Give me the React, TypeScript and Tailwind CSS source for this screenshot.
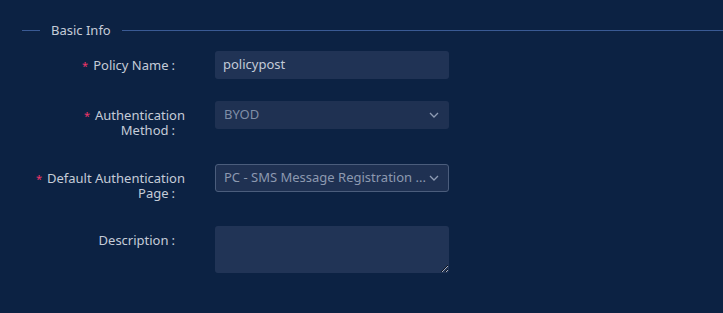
import React from "react";

const Chevron = () => (
  <svg width="10" height="6" viewBox="0 0 10 6" fill="none">
    <path d="M1 1 L5 5 L9 1" stroke="#8e9bb3" strokeWidth="1.3" />
  </svg>
);

function Label({ lines, required }: { lines: string[]; required?: boolean }) {
  return (
    <div className="w-[185px] shrink-0 flex justify-end pt-[7px]">
      <div className="text-right text-[13px] leading-[15px] text-[#c5ccd8] whitespace-nowrap">
        {lines.map((l, i) => (
          <div key={i}>
            {i === 0 && required && (
              <span className="text-[#f0356a] mr-[5px] text-[11px] align-top">*</span>
            )}
            {l}
            {i === lines.length - 1 && <span className="ml-[3px] mr-[10px]">:</span>}
          </div>
        ))}
      </div>
    </div>
  );
}

export default function App() {
  return (
    <div
      className="w-[723px] h-[313px] bg-[#0c2243] overflow-hidden"
      style={{ fontFamily: '"Noto Sans", "Open Sans", sans-serif' }}
    >
      <div className="flex items-center pt-[22px] pl-[22px]">
        <div className="w-[18px] h-px bg-[#3a5a94]" />
        <div className="px-[11px] text-[13px] leading-[16px] text-[#c5ccd8]">Basic Info</div>
        <div className="flex-1 h-px bg-[#3a5a94]" />
      </div>

      <div className="mt-[13px] flex flex-col">
        <div className="flex h-[50px]">
          <Label required lines={["Policy Name"]} />
          <div className="ml-[30px] w-[234px] h-[28px] rounded-[3px] bg-[#203355] flex items-center px-[8px] text-[13px] text-[#c3cbd8]">
            policypost
          </div>
        </div>

        <div className="flex h-[63px]">
          <Label required lines={["Authentication", "Method"]} />
          <div className="ml-[30px] w-[234px] h-[28px] rounded-[3px] bg-[#1f3152] flex items-center justify-between pl-[9px] pr-[10px] text-[13px] text-[#7f8ea7]">
            <span>BYOD</span>
            <Chevron />
          </div>
        </div>

        <div className="flex h-[62px]">
          <Label required lines={["Default Authentication", "Page"]} />
          <div className="ml-[30px] w-[234px] h-[28px] rounded-[3px] bg-[#1f3152] border border-[#4b5d7c] flex items-center justify-between pl-[8px] pr-[9px] text-[13px] text-[#8d99b0]">
            <span className="whitespace-nowrap overflow-hidden">PC - SMS Message Registration ...</span>
            <Chevron />
          </div>
        </div>

        <div className="flex">
          <Label lines={["Description"]} />
          <textarea
            className="ml-[30px] w-[234px] h-[47px] rounded-[3px] bg-[#213456] outline-none resize-y"
            readOnly
          />
        </div>
      </div>
    </div>
  );
}
